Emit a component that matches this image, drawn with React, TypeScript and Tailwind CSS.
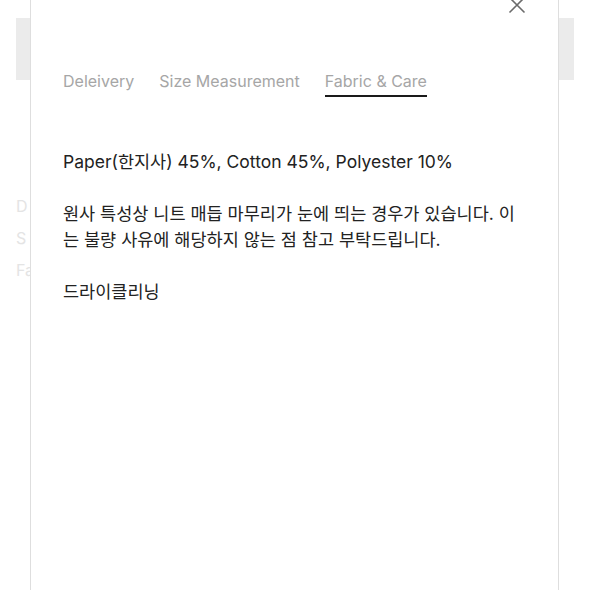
export default function App() {
  const tabs = ['Deleivery', 'Size Measurement', 'Fabric & Care'];
  const active = 2;

  return (
    <div
      className="relative w-[590px] h-[590px] overflow-hidden bg-white"
      style={{ fontFamily: 'Inter, "Noto Sans CJK KR", sans-serif' }}
    >
      {/* page behind the sheet */}
      <div className="px-4 pt-[18px]">
        <div className="h-[62px] w-full bg-[#ebebeb]" />
        <div className="mt-[114px] flex flex-col gap-2 text-base leading-6 text-[#e4e4e4]">
          <span>D</span>
          <span>S</span>
          <span>Fa</span>
        </div>
      </div>

      {/* sheet */}
      <div className="absolute left-[30px] top-0 h-full w-[529px] bg-white border-x border-[#dedede]">
        <button className="absolute right-[32px] -top-[4px] text-[#6b6b6b]">
          <svg width="18" height="18" viewBox="0 0 18 18" fill="none" stroke="currentColor" strokeWidth="1.6">
            <path d="M1.5 1.5l15 15M16.5 1.5l-15 15" />
          </svg>
        </button>

        <div className="px-8 pt-[69px]">
          <div className="flex gap-[25px]">
            {tabs.map((t, i) => (
              <div
                key={t}
                className={`pb-[2px] text-base leading-6 text-[#a6a6a6] border-b-2 ${i === active ? 'border-[#1a1a1a]' : 'border-transparent'}`}
              >
                {t}
              </div>
            ))}
          </div>

          <div className="mt-[52px] text-[17.5px] leading-[26px] text-[#222]">
            <p className="mb-[26px]">Paper(한지사) 45%, Cotton 45%, Polyester 10%</p>
            <p className="mb-[26px]">
              원사 특성상 니트 매듭 마무리가 눈에 띄는 경우가 있습니다. 이는 불량 사유에 해당하지 않는 점 참고 부탁드립니다.
            </p>
            <p>드라이클리닝</p>
          </div>
        </div>
      </div>
    </div>
  );
}
